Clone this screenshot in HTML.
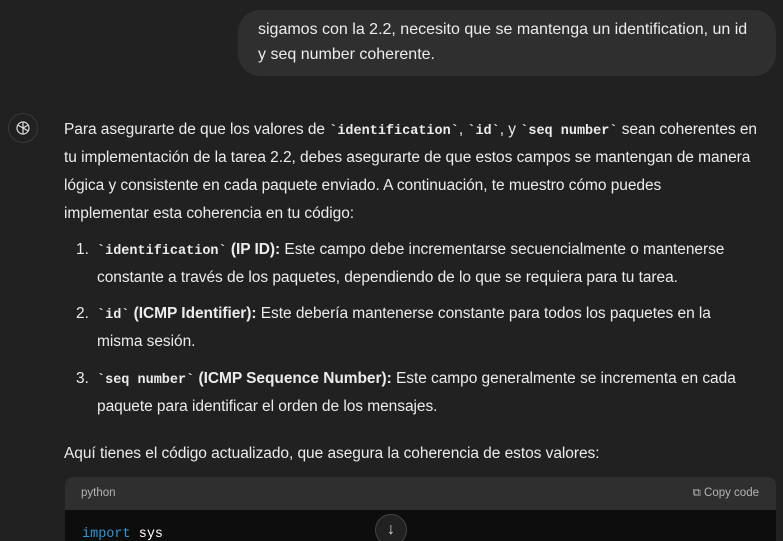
<!DOCTYPE html>
<html style="overflow:hidden;height:541px"><head><meta charset="utf-8"><style>
body{margin:0;width:783px;height:541px;overflow:hidden;background:#212121;color:#ececec;font-family:"Liberation Sans",sans-serif;position:relative}
.l{position:absolute;white-space:nowrap;font-size:15.5px;letter-spacing:-0.05px;line-height:28px}
code{font-family:"Liberation Mono",monospace;font-weight:bold;font-size:13.5px;letter-spacing:0}
b{font-weight:bold}
.bub{position:absolute;left:238px;top:10px;width:538px;height:66px;background:#2f2f2f;border-radius:22px}
</style></head><body>
<div class="bub"></div>
<div class="l" style="left:258px;top:16px;font-size:16px;letter-spacing:0">sigamos con la 2.2, necesito que se mantenga un identification, un id</div>
<div class="l" style="left:258px;top:41px;font-size:16px;letter-spacing:0">y seq number coherente.</div>
<div style="position:absolute;left:8px;top:113px;width:30px;height:30px;border:1px solid #3a3a3a;border-radius:50%;box-sizing:border-box;display:flex;align-items:center;justify-content:center">
<svg width="18" height="18" viewBox="0 0 24 24" fill="none" stroke="#ddd" stroke-width="1.6"><circle cx="12" cy="12" r="8"/><path d="M12 4v8l7 4M5 8l7 4v8M19 8l-7 4"/></svg></div>
<div class="l" style="left:64px;top:116px">Para asegurarte de que los valores de <code>`identification`</code>, <code>`id`</code>, y <code>`seq number`</code> sean coherentes en</div>
<div class="l" style="left:64px;top:144px">tu implementación de la tarea 2.2, debes asegurarte de que estos campos se mantengan de manera</div>
<div class="l" style="left:64px;top:172px">lógica y consistente en cada paquete enviado. A continuación, te muestro cómo puedes</div>
<div class="l" style="left:64px;top:200px">implementar esta coherencia en tu código:</div>
<div class="l" style="left:76px;top:236px">1.</div>
<div class="l" style="left:97px;top:236px"><code>`identification`</code> <b>(IP ID):</b> Este campo debe incrementarse secuencialmente o mantenerse</div>
<div class="l" style="left:97px;top:264px">constante a través de los paquetes, dependiendo de lo que se requiera para tu tarea.</div>
<div class="l" style="left:76px;top:300px">2.</div>
<div class="l" style="left:97px;top:300px"><code>`id`</code> <b>(ICMP Identifier):</b> Este debería mantenerse constante para todos los paquetes en la</div>
<div class="l" style="left:97px;top:328px">misma sesión.</div>
<div class="l" style="left:76px;top:365px">3.</div>
<div class="l" style="left:97px;top:365px"><code>`seq number`</code> <b>(ICMP Sequence Number):</b> Este campo generalmente se incrementa en cada</div>
<div class="l" style="left:97px;top:393px">paquete para identificar el orden de los mensajes.</div>
<div class="l" style="left:64px;top:440px">Aquí tienes el código actualizado, que asegura la coherencia de estos valores:</div>
<div style="position:absolute;left:65px;top:477px;width:711px;height:64px;border-radius:8px 8px 0 0;overflow:hidden;background:#0d0d0d">
<div style="height:33px;background:#2f2f2f;position:relative;font-size:11.5px;color:#b4b4b4">
<span style="position:absolute;left:16px;top:10px">python</span>
<span style="position:absolute;right:17px;top:10px">⧉ Copy code</span></div>
<div style="position:absolute;left:17px;top:50px;font-family:'Liberation Mono',monospace;font-size:13.5px"><span style="color:#2e95d3">import</span> <span style="color:#fff">sys</span></div>
</div>
<div style="position:absolute;left:375px;top:514px;width:32px;height:32px;border-radius:50%;background:#212121;border:1px solid #444;box-sizing:border-box;text-align:center;color:#ddd;font-size:16px;line-height:30px">↓</div>
</body></html>
